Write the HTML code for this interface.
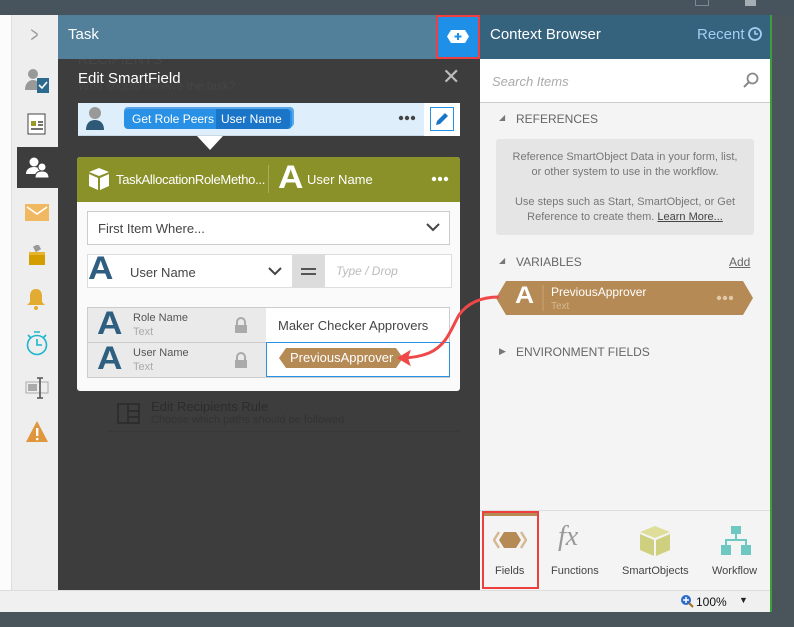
<!DOCTYPE html>
<html><head><meta charset="utf-8"><style>
*{margin:0;padding:0;box-sizing:border-box}
body{width:794px;height:627px;overflow:hidden;background:#4a545b;font-family:"Liberation Sans",sans-serif;position:relative}
.a{position:absolute}
.t{white-space:nowrap}
.bigA{font-size:32px;font-weight:bold;transform:scaleX(1.1);transform-origin:left top;line-height:1}
</style></head><body>
<!-- top bar -->
<div class="a" style="left:0;top:0;width:794px;height:15px;background:#47545d"></div>
<div class="a" style="left:695px;top:0;width:14px;height:6px;border:1px solid #aab;border-top:none;opacity:.6"></div>
<div class="a" style="left:745px;top:0;width:11px;height:6px;background:#cfd4d8;opacity:.7"></div>
<!-- left strip -->
<div class="a" style="left:0;top:15px;width:12px;height:575px;background:#fcfcfc;border-right:1px solid #ddd"></div>
<div class="a" style="left:12px;top:15px;width:46px;height:575px;background:#eeeeee"></div>
<div class="a t" style="left:28px;top:22px;font-size:22px;color:#999;transform:scaleX(.6)">&gt;</div>
<svg class="a" style="left:24px;top:68px" width="26" height="26"><circle cx="9" cy="6" r="5" fill="#999"/><path d="M1 22c0-7 4-10 8-10s8 3 8 10z" fill="#999"/><rect x="13" y="10" width="12" height="15" fill="#2e6a8e"/><path d="M15 17l3 3 5-6" stroke="#fff" stroke-width="1.6" fill="none"/></svg>
<svg class="a" style="left:27px;top:113px" width="20" height="22"><rect x="1" y="1" width="17" height="20" fill="#fff" stroke="#444"/><rect x="4" y="8" width="5" height="5" fill="#9a9a2a"/><path d="M11 9h5M11 12h5M4 16h12" stroke="#444" stroke-width="1.5"/></svg>
<div class="a" style="left:17px;top:147px;width:41px;height:41px;background:#3d3d3d"></div>
<svg class="a" style="left:25px;top:156px" width="26" height="24"><circle cx="9" cy="6" r="4.5" fill="#fff"/><path d="M1 18c0-5 4-7 8-7s8 2 8 7z" fill="#fff"/><circle cx="17" cy="11" r="4" fill="#fff" stroke="#3d3d3d"/><path d="M10 22c0-5 3-7 7-7s7 2 7 7z" fill="#fff" stroke="#3d3d3d"/></svg>
<svg class="a" style="left:25px;top:204px" width="24" height="18"><rect width="24" height="17" fill="#f0b860"/><path d="M2 3l10 7 10-7" stroke="#fff" stroke-width="1.6" fill="none"/></svg>
<svg class="a" style="left:28px;top:245px" width="18" height="22"><rect x="6" y="0" width="6" height="6" fill="#999" transform="rotate(-30 9 3)"/><rect x="1" y="10" width="16" height="10" fill="#d49e00"/><rect x="1" y="7" width="16" height="3" fill="#e6b530"/></svg>
<svg class="a" style="left:26px;top:287px" width="20" height="24"><path d="M10 2c-4 0-6 3-6 7v6l-3 3h18l-3-3V9c0-4-2-7-6-7z" fill="#e2ac33"/><circle cx="10" cy="21" r="2" fill="#e2ac33"/></svg>
<svg class="a" style="left:25px;top:330px" width="24" height="26"><circle cx="12" cy="15" r="9.5" stroke="#1bb5cf" stroke-width="1.6" fill="none"/><path d="M12 9v6h5M9 2h6M3 5l3 3M21 5l-3 3" stroke="#1bb5cf" stroke-width="1.6" fill="none"/></svg>
<svg class="a" style="left:25px;top:377px" width="24" height="22"><rect x="1" y="5" width="22" height="11" fill="none" stroke="#aaa"/><rect x="3" y="7" width="9" height="7" fill="#aaa"/><path d="M15 1v20M12 1h6M12 21h6" stroke="#555" stroke-width="1.6"/></svg>
<svg class="a" style="left:25px;top:420px" width="24" height="23"><path d="M12 1L23 22H1z" fill="#e0963a"/><rect x="11" y="8" width="2.4" height="8" fill="#fff"/><circle cx="12.2" cy="19" r="1.3" fill="#fff"/></svg>
<!-- task area -->
<div class="a" style="left:58px;top:59px;width:422px;height:531px;background:#3d3d3d"></div>
<div class="a t" style="left:78px;top:51px;font-size:14px;color:#474747">RECIPIENTS</div>
<div class="a" style="left:58px;top:15px;width:422px;height:44px;background:#527f99"></div>
<div class="a t" style="left:68px;top:26px;font-size:15px;color:#fff">Task</div>
<div class="a" style="left:436px;top:15px;width:44px;height:44px;background:#1e90e8;outline:2px solid #ee3f3f;outline-offset:-2px"></div>
<svg class="a" style="left:446px;top:29px" width="24" height="15"><path d="M5 1h14l4 6.5-4 6.5H5L1 7.5z" fill="#fff"/><path d="M12 4v7M8.5 7.5h7" stroke="#1e90e8" stroke-width="2"/></svg>
<div class="a t" style="left:78px;top:79px;font-size:12px;color:#454545">Who should receive the task?</div>
<div class="a t" style="left:78px;top:70px;font-size:15px;color:#fff">Edit SmartField</div>
<div class="a t" style="left:442px;top:64px;font-size:22px;color:#bbb">✕</div>
<!-- header row -->
<div class="a" style="left:78px;top:103px;width:382px;height:33px;background:#deeefb;border-bottom:1px solid #c8d8e4"></div>
<div class="a" style="left:424px;top:103px;width:36px;height:33px;background:#fff"></div>
<svg class="a" style="left:85px;top:106px" width="20" height="24"><circle cx="10" cy="7" r="6" fill="#999"/><path d="M1 24c0-7 4-10 9-10s9 3 9 10z" fill="#2e5a78"/></svg>
<div class="a" style="left:124px;top:107px;width:170px;height:20px;border-radius:4px;background:#5aa6e8"></div>
<div class="a" style="left:124px;top:109px;width:168px;height:20px;border-radius:4px;background:#2891e6"></div>
<div class="a" style="left:216px;top:109px;width:74px;height:20px;border-radius:0 4px 4px 0;background:#1a75c8"></div>
<div class="a t" style="left:132px;top:112px;font-size:12px;color:#fff">Get Role Peers</div>
<div class="a t" style="left:221px;top:112px;font-size:12px;color:#fff">User Name</div>
<svg class="a" style="left:398px;top:115px" width="18" height="6"><circle cx="3" cy="3" r="2.2" fill="#444"/><circle cx="9" cy="3" r="2.2" fill="#444"/><circle cx="15" cy="3" r="2.2" fill="#444"/></svg>
<div class="a" style="left:430px;top:107px;width:24px;height:24px;border:1px solid #2891e6;background:#fff"></div>
<svg class="a" style="left:434px;top:111px" width="16" height="16"><path d="M2 14l1-4 8-8 3 3-8 8z" fill="#1a75c8"/></svg>
<div class="a" style="left:197px;top:136px;width:0;height:0;border-left:13px solid transparent;border-right:13px solid transparent;border-top:14px solid #fff"></div>
<!-- card -->
<div class="a" style="left:77px;top:157px;width:383px;height:234px;background:#fafafa;border-radius:3px"></div>
<div class="a" style="left:77px;top:157px;width:383px;height:45px;background:#8b9129;border-radius:3px 3px 0 0"></div>
<svg class="a" style="left:88px;top:167px" width="22" height="24"><path d="M11 1l10 4-10 4L1 5z" fill="#fff"/><path d="M1 7l9 4v12l-9-4zM21 7l-9 4v12l9-4z" fill="#fff"/></svg>
<div class="a t" style="left:116px;top:172px;font-size:13px;color:#fff;letter-spacing:-.3px">TaskAllocationRoleMetho...</div>
<div class="a" style="left:268px;top:165px;width:1px;height:28px;background:#a9ad5c"></div>
<div class="a t bigA" style="left:278px;top:161px;color:#fff">A</div>
<div class="a t" style="left:307px;top:172px;font-size:13px;color:#fff">User Name</div>
<svg class="a" style="left:431px;top:176px" width="18" height="6"><circle cx="3" cy="3" r="2.2" fill="#fff"/><circle cx="9" cy="3" r="2.2" fill="#fff"/><circle cx="15" cy="3" r="2.2" fill="#fff"/></svg>
<div class="a" style="left:87px;top:211px;width:363px;height:34px;background:#fff;border:1px solid #ccc"></div>
<div class="a t" style="left:98px;top:221px;font-size:13px;color:#444">First Item Where...</div>
<svg class="a" style="left:426px;top:222px" width="14" height="10"><path d="M1 2l6 6 6-6" stroke="#444" stroke-width="2" fill="none"/></svg>
<div class="a" style="left:87px;top:254px;width:365px;height:34px;background:#fff;border:1px solid #ddd"></div>
<div class="a t bigA" style="left:88px;top:252px;color:#2e5e80">A</div>
<div class="a t" style="left:130px;top:265px;font-size:13px;color:#444">User Name</div>
<svg class="a" style="left:268px;top:266px" width="14" height="10"><path d="M1 2l6 6 6-6" stroke="#444" stroke-width="2" fill="none"/></svg>
<div class="a" style="left:292px;top:255px;width:33px;height:32px;background:#dcdcdc"></div>
<div class="a" style="left:301px;top:268px;width:15px;height:2px;background:#555"></div>
<div class="a" style="left:301px;top:273px;width:15px;height:2px;background:#555"></div>
<div class="a t" style="left:336px;top:264px;font-size:12px;color:#bbb;font-style:italic">Type / Drop</div>
<div class="a" style="left:87px;top:307px;width:363px;height:71px;border:1px solid #ccc;background:#eaeaea"></div>
<div class="a" style="left:87px;top:342px;width:180px;height:1px;background:#ccc"></div>
<div class="a" style="left:266px;top:308px;width:183px;height:34px;background:#fff"></div>
<div class="a" style="left:266px;top:342px;width:184px;height:35px;background:#fff;border:1px solid #2891e6"></div>
<div class="a t bigA" style="left:97px;top:307px;color:#2e5e80">A</div>
<div class="a t bigA" style="left:97px;top:342px;color:#2e5e80">A</div>
<div class="a t" style="left:133px;top:312px;font-size:11px;color:#555">Role Name</div>
<div class="a t" style="left:133px;top:326px;font-size:11px;color:#aaa">Text</div>
<div class="a t" style="left:133px;top:347px;font-size:11px;color:#555">User Name</div>
<div class="a t" style="left:133px;top:361px;font-size:11px;color:#aaa">Text</div>
<svg class="a" style="left:233px;top:317px" width="16" height="16"><path d="M4 8V5a4 4 0 018 0v3" stroke="#aaa" stroke-width="2" fill="none"/><rect x="2" y="8" width="12" height="8" fill="#aaa"/></svg>
<svg class="a" style="left:233px;top:352px" width="16" height="16"><path d="M4 8V5a4 4 0 018 0v3" stroke="#aaa" stroke-width="2" fill="none"/><rect x="2" y="8" width="12" height="8" fill="#aaa"/></svg>
<div class="a t" style="left:278px;top:318px;font-size:13px;color:#444">Maker Checker Approvers</div>
<svg class="a" style="left:279px;top:348px" width="124" height="20"><path d="M7 0h110l7 10-7 10H7L0 10z" fill="#b58a55"/></svg>
<div class="a t" style="left:290px;top:350px;font-size:13px;color:#fff">PreviousApprover</div>
<!-- edit recipients rule -->
<div class="a" style="left:107px;top:392px;width:352px;height:40px;border-bottom:1px solid #383838"></div>
<svg class="a" style="left:117px;top:403px" width="24" height="22"><rect x="1" y="1" width="21" height="19" fill="none" stroke="#2a2a2a" stroke-width="1.5"/><path d="M11 1v19M11 8h11M11 14h11" stroke="#2a2a2a" stroke-width="1.5"/></svg>
<div class="a t" style="left:151px;top:399px;font-size:13px;color:#2c2c2c">Edit Recipients Rule</div>
<div class="a t" style="left:151px;top:414px;font-size:11px;color:#333">Choose which paths should be followed</div>
<!-- right panel -->
<div class="a" style="left:480px;top:15px;width:290px;height:44px;background:#35627c"></div>
<div class="a t" style="left:490px;top:26px;font-size:15px;color:#fff">Context Browser</div>
<div class="a t" style="left:697px;top:26px;font-size:15px;color:#9fd0f4">Recent</div>
<svg class="a" style="left:748px;top:27px" width="14" height="14"><circle cx="7" cy="7" r="6" stroke="#9fd0f4" stroke-width="1.8" fill="none"/><path d="M7 3.5V7h3" stroke="#9fd0f4" stroke-width="1.6" fill="none"/></svg>
<div class="a" style="left:480px;top:59px;width:290px;height:44px;background:#fff;border-bottom:1px solid #ccc"></div>
<div class="a t" style="left:492px;top:74px;font-size:13px;color:#aaa;font-style:italic">Search Items</div>
<svg class="a" style="left:743px;top:72px" width="16" height="16"><circle cx="9.5" cy="6.5" r="5" stroke="#888" stroke-width="1.8" fill="none"/><path d="M6 10l-5 5" stroke="#888" stroke-width="2"/></svg>
<div class="a" style="left:480px;top:103px;width:290px;height:408px;background:#f4f4f4"></div>
<div class="a" style="left:770px;top:15px;width:2px;height:597px;background:#3aa03a"></div>
<div class="a t" style="left:499px;top:113px;font-size:8px;color:#777">◢</div>
<div class="a t" style="left:516px;top:112px;font-size:12px;color:#666">REFERENCES</div>
<div class="a" style="left:496px;top:139px;width:258px;height:96px;background:#e5e5e5;border-radius:3px"></div>
<div class="a" style="left:496px;top:150px;width:258px;text-align:center;font-size:11px;line-height:15px;color:#777">Reference SmartObject Data in your form, list,<br>or other system to use in the workflow.<br><br>Use steps such as Start, SmartObject, or Get<br>Reference to create them. <span style="color:#444;text-decoration:underline">Learn More...</span></div>
<div class="a t" style="left:499px;top:256px;font-size:8px;color:#777">◢</div>
<div class="a t" style="left:516px;top:255px;font-size:12px;color:#666">VARIABLES</div>
<div class="a t" style="left:729px;top:255px;font-size:12px;color:#666;text-decoration:underline">Add</div>
<svg class="a" style="left:496px;top:281px" width="258" height="34"><path d="M10 0h237l10 17-10 17H10L0 17z" fill="#b58a55"/><path d="M47 4v26" stroke="#c9a273"/></svg>
<div class="a t" style="left:515px;top:284px;font-size:24px;font-weight:bold;color:#fff;line-height:1;transform:scaleX(1.1);transform-origin:left top">A</div>
<div class="a t" style="left:551px;top:285px;font-size:12px;color:#fff">PreviousApprover</div>
<div class="a t" style="left:551px;top:301px;font-size:10px;color:#d6b993">Text</div>
<svg class="a" style="left:716px;top:295px" width="18" height="6"><circle cx="3" cy="3" r="2.2" fill="#e0c9a8"/><circle cx="9" cy="3" r="2.2" fill="#e0c9a8"/><circle cx="15" cy="3" r="2.2" fill="#e0c9a8"/></svg>
<div class="a t" style="left:499px;top:346px;font-size:9px;color:#777">▶</div>
<div class="a t" style="left:516px;top:345px;font-size:12px;color:#666">ENVIRONMENT FIELDS</div>
<!-- red arrow -->
<svg class="a" style="left:395px;top:290px" width="110" height="80"><path d="M104 7c-15 0-30 4-40 18-8 14-12 30-30 38-10 4-20 5-28 5" stroke="#f04848" stroke-width="3" fill="none"/><path d="M4 68l10-6-2 6 2 6z" fill="#f04848" stroke="#f04848" stroke-width="2"/></svg>
<!-- bottom toolbar -->
<div class="a" style="left:480px;top:510px;width:290px;height:80px;background:#f4f4f4;border-top:1px solid #ddd"></div>
<div class="a" style="left:482px;top:511px;width:57px;height:78px;border:2px solid #ee3f3f"></div>
<div class="a" style="left:484px;top:513px;width:53px;height:3px;background:#b58a55"></div>
<svg class="a" style="left:493px;top:530px" width="34" height="20"><path d="M11 2h12l5 8-5 8H11l-5-8z" fill="#b58a55"/><path d="M6 2l-5 8 5 8M28 2l5 8-5 8" stroke="#d6b993" stroke-width="2.5" fill="none"/></svg>
<div class="a t" style="left:495px;top:565px;font-size:11px;color:#444">Fields</div>
<div class="a t" style="left:558px;top:521px;font-size:28px;color:#999;font-style:italic;font-family:'Liberation Serif',serif">fx</div>
<div class="a t" style="left:551px;top:565px;font-size:11px;color:#444">Functions</div>
<svg class="a" style="left:639px;top:525px" width="32" height="32"><path d="M16 1l15 6-15 6L1 7z" fill="#dede9a"/><path d="M1 9l14 6v16L1 25zM31 9l-14 6v16l14-6z" fill="#cfcf80"/></svg>
<div class="a t" style="left:622px;top:565px;font-size:11px;color:#444">SmartObjects</div>
<svg class="a" style="left:720px;top:525px" width="32" height="31"><rect x="11" y="1" width="10" height="8" fill="#6cc8c0"/><rect x="1" y="20" width="10" height="10" fill="#6cc8c0"/><rect x="21" y="20" width="10" height="10" fill="#6cc8c0"/><path d="M16 9v5M6 20v-5h20v5" stroke="#6cc8c0" stroke-width="2" fill="none"/></svg>
<div class="a t" style="left:712px;top:565px;font-size:11px;color:#444">Workflow</div>
<!-- status bar -->
<div class="a" style="left:0;top:590px;width:770px;height:22px;background:#f0f0f0;border-top:1px solid #ddd"></div>
<svg class="a" style="left:680px;top:594px" width="14" height="14"><circle cx="6" cy="6" r="5" fill="#2a6ad0"/><path d="M6 3v6M3 6h6" stroke="#fff" stroke-width="1.5"/><path d="M9 9l4 4" stroke="#a07020" stroke-width="2"/></svg>
<div class="a t" style="left:696px;top:595px;font-size:12px;color:#111">100%</div>
<div class="a t" style="left:739px;top:595px;font-size:9px;color:#222">▼</div>
</body></html>
